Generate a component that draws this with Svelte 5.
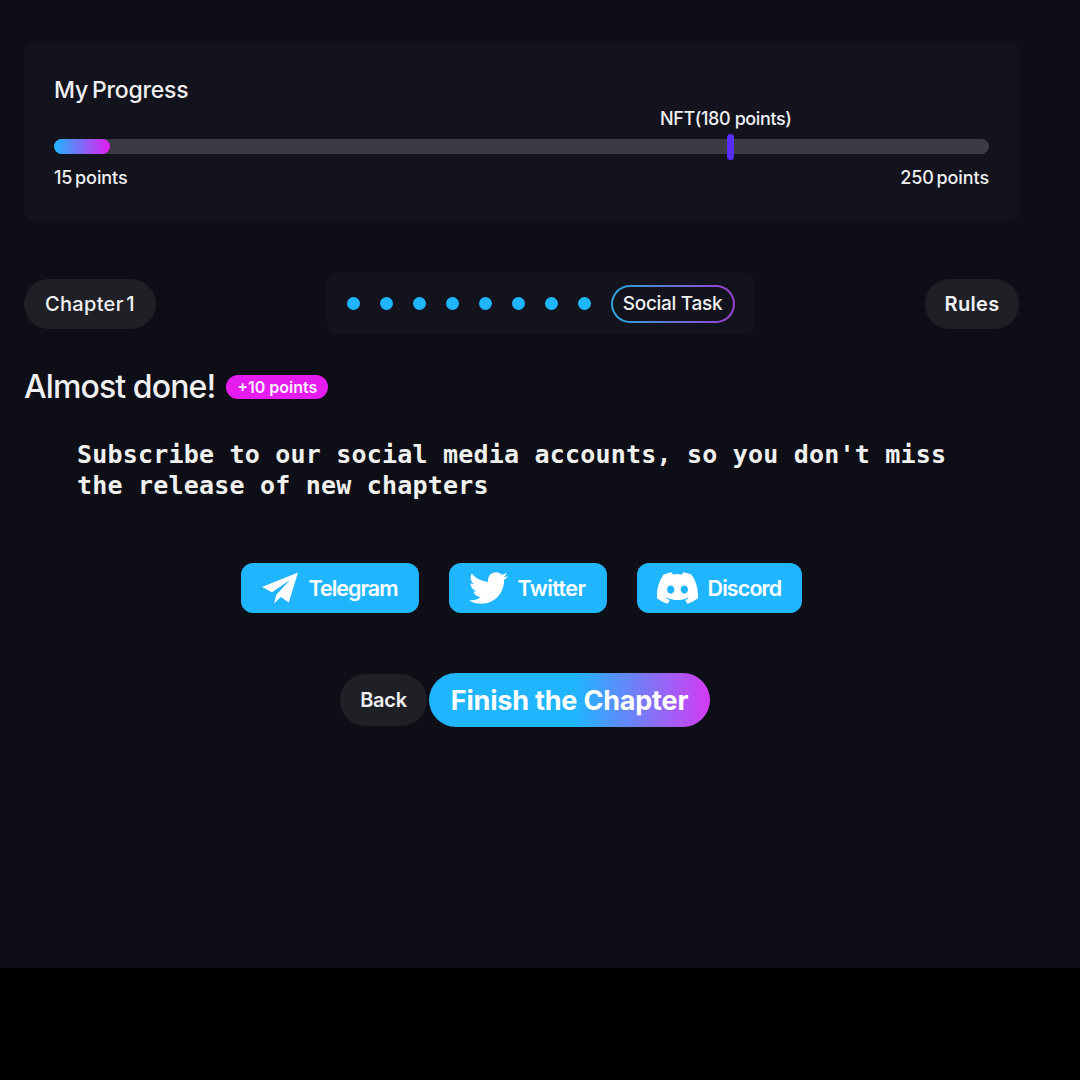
<script>
  const dots = [0, 1, 2, 3, 4, 5, 6, 7];
</script>

<div class="page">
  <section class="card">
    <h2>My Progress</h2>
    <div class="track">
      <div class="fill"></div>
      <span class="nft">NFT(180 points)</span>
      <span class="marker"></span>
    </div>
    <div class="scale"><span>15 points</span><span>250 points</span></div>
  </section>

  <nav class="bar">
    <div class="pill chapter">Chapter 1</div>
    <div class="steps">
      {#each dots as d}<span class="dot"></span>{/each}
      <span class="current">Social Task</span>
    </div>
    <div class="pill rules">Rules</div>
  </nav>

  <div class="title">
    <h1>Almost done!</h1>
    <span class="badge">+10 points</span>
  </div>

  <p class="task">Subscribe to our social media accounts, so you don't miss the release of new chapters</p>

  <div class="socials">
    <div class="social tg">
      <svg width="38" height="32" viewBox="0 0 38 32"><path fill="#fff" d="M37 .5 1 15l10 5.2L29 8 15.5 22.5 13 31.5l6.8-6.4 8 5.5z"/></svg>
      Telegram
    </div>
    <div class="social tw">
      <svg width="39" height="32" viewBox="0 0 512 420"><path transform="translate(0 -46)" fill="#fff" d="M459.37 151.716c.325 4.548.325 9.097.325 13.645 0 138.72-105.583 298.558-298.558 298.558-59.452 0-114.68-17.219-161.137-47.106 8.447.974 16.568 1.299 25.34 1.299 49.055 0 94.213-16.568 130.274-44.832-46.132-.975-84.792-31.188-98.112-72.772 6.498.974 12.995 1.624 19.818 1.624 9.421 0 18.843-1.3 27.614-3.573-48.081-9.747-84.143-51.98-84.143-102.985v-1.299c13.969 7.797 30.214 12.67 47.431 13.319-28.264-18.843-46.781-51.005-46.781-87.391 0-19.492 5.197-37.36 14.294-52.954 51.655 63.675 129.3 105.258 216.365 109.807-1.624-7.797-2.599-15.918-2.599-24.04 0-57.828 46.782-104.934 104.934-104.934 30.213 0 57.502 12.67 76.67 33.137 23.715-4.548 46.456-13.32 66.599-25.34-7.798 24.366-24.366 44.833-46.132 57.827 21.117-2.273 41.584-8.122 60.426-16.243-14.292 20.791-32.161 39.308-52.628 54.253z"/></svg>
      Twitter
    </div>
    <div class="social dc">
      <svg width="41" height="32" viewBox="0 1.8 16 12.4" preserveAspectRatio="none"><path fill="#fff" d="M13.545 2.907a13.227 13.227 0 0 0-3.257-1.011.05.05 0 0 0-.052.025c-.141.25-.297.577-.406.833a12.19 12.19 0 0 0-3.658 0 8.258 8.258 0 0 0-.412-.833.051.051 0 0 0-.052-.025c-1.125.194-2.22.534-3.257 1.011a.041.041 0 0 0-.021.018C.356 6.024-.213 9.047.066 12.032c.001.014.01.028.021.037a13.276 13.276 0 0 0 3.995 2.02.05.05 0 0 0 .056-.019c.308-.42.582-.863.818-1.329a.05.05 0 0 0-.01-.059.051.051 0 0 0-.018-.011 8.875 8.875 0 0 1-1.248-.595.05.05 0 0 1-.02-.066.051.051 0 0 1 .015-.019c.084-.063.168-.129.248-.195a.05.05 0 0 1 .051-.007c2.619 1.196 5.454 1.196 8.041 0a.052.052 0 0 1 .053.007c.08.066.164.132.248.195a.051.051 0 0 1-.004.085 8.254 8.254 0 0 1-1.249.594.05.05 0 0 0-.03.03.052.052 0 0 0 .003.041c.24.465.515.909.817 1.329a.05.05 0 0 0 .056.019 13.235 13.235 0 0 0 4.001-2.02.049.049 0 0 0 .021-.037c.334-3.451-.559-6.449-2.366-9.106a.034.034 0 0 0-.02-.019Zm-8.198 7.307c-.789 0-1.438-.724-1.438-1.612 0-.889.637-1.613 1.438-1.613.807 0 1.45.73 1.438 1.613 0 .888-.637 1.612-1.438 1.612Zm5.316 0c-.788 0-1.438-.724-1.438-1.612 0-.889.637-1.613 1.438-1.613.807 0 1.451.73 1.438 1.613 0 .888-.631 1.612-1.438 1.612Z"/></svg>
      Discord
    </div>
  </div>

  <div class="actions">
    <div class="back">Back</div>
    <div class="finish">Finish the Chapter</div>
  </div>
</div>

<style>
  :global(body) {
    margin: 0;
    background: #000;
  }
  .page {
    box-sizing: border-box;
    width: 1080px;
    height: 968px;
    padding: 42px 60px 0 24px;
    background: #0d0e16;
    color: #f0f0f2;
    font-family: Inter, "Noto Sans", sans-serif;
  }
  .card {
    box-sizing: border-box;
    height: 179px;
    padding: 34px 31px 0 30px;
    background: #12131d;
    border-radius: 10px;
  }
  h2 {
    margin: 0;
    font-size: 23px;
    line-height: 28px;
    font-weight: 500;
    letter-spacing: -0.2px;
    word-spacing: -2px;
  }
  .track {
    position: relative;
    height: 15px;
    margin-top: 35px;
    background: #3b3b45;
    border-radius: 8px;
  }
  .fill {
    width: 56px;
    height: 100%;
    border-radius: 8px;
    background: linear-gradient(90deg, #1fb6ff, #e41cf0);
  }
  .nft {
    position: absolute;
    left: 606px;
    top: -32px;
    font-size: 18px;
    line-height: 24px;
    font-weight: 500;
    letter-spacing: -0.4px;
    white-space: nowrap;
  }
  .marker {
    position: absolute;
    left: 673px;
    top: -5px;
    width: 7px;
    height: 26px;
    border-radius: 4px;
    background: #5a2dff;
  }
  .scale {
    display: flex;
    justify-content: space-between;
    margin-top: 12px;
    font-size: 18px;
    line-height: 24px;
    font-weight: 500;
    letter-spacing: -0.1px;
    word-spacing: -2px;
  }
  .bar {
    display: flex;
    justify-content: space-between;
    align-items: center;
    margin: 51px 1px 0 0;
  }
  .pill {
    box-sizing: border-box;
    height: 50px;
    display: flex;
    align-items: center;
    justify-content: center;
    background: #1f2026;
    border-radius: 25px;
    font-size: 20px;
    font-weight: 500;
    letter-spacing: 0.3px;
    word-spacing: -3px;
  }
  .chapter { width: 132px; }
  .rules {
    width: 94px;
    font-weight: 600;
  }
  .steps {
    box-sizing: border-box;
    width: 428px;
    height: 63px;
    padding: 0 20px;
    display: flex;
    align-items: center;
    justify-content: space-between;
    background: #12131d;
    border-radius: 10px;
  }
  .dot {
    width: 13px;
    height: 13px;
    border-radius: 50%;
    background: #1fb6ff;
  }
  .current {
    box-sizing: border-box;
    width: 124px;
    height: 38px;
    display: flex;
    align-items: center;
    justify-content: center;
    border: 2px solid transparent;
    border-radius: 19px;
    background:
      linear-gradient(#12131d, #12131d) padding-box,
      linear-gradient(90deg, #2aa5dd, #9c3fd2) border-box;
    font-size: 19px;
    font-weight: 500;
    letter-spacing: -0.3px;
  }
  .title {
    display: flex;
    align-items: center;
    gap: 11px;
    margin-top: 30px;
  }
  h1 {
    margin: 0;
    font-size: 32px;
    line-height: 44px;
    font-weight: 500;
    letter-spacing: -0.9px;
  }
  .badge {
    box-sizing: border-box;
    width: 102px;
    height: 24px;
    display: flex;
    align-items: center;
    justify-content: center;
    border-radius: 12px;
    background: #e41cf0;
    font-size: 16px;
    font-weight: 600;
    letter-spacing: 0;
    color: #fbeaff;
  }
  .task {
    width: 890px;
    margin: 30px 0 0 53px;
    font-family: "DejaVu Sans Mono", "Liberation Mono", monospace;
    font-size: 25px;
    line-height: 31px;
    font-weight: 700;
    letter-spacing: 0.2px;
    color: #f0f0ee;
  }
  .socials {
    display: flex;
    justify-content: center;
    gap: 30px;
    margin: 62px 2px 0 0;
  }
  .social {
    box-sizing: border-box;
    height: 50px;
    display: flex;
    align-items: center;
    gap: 10px;
    padding-left: 20px;
    border-radius: 12px;
    background: #1fb6ff;
    color: #fff;
    font-size: 21.5px;
    font-weight: 600;
    letter-spacing: -0.6px;
  }
  .tg {
    width: 178px;
    letter-spacing: -1px;
  }
  .tw { width: 158px; }
  .dc {
    width: 165px;
    letter-spacing: -0.9px;
  }
  .actions {
    display: flex;
    justify-content: center;
    align-items: center;
    gap: 2px;
    margin: 60px 0 0 6px;
  }
  .back {
    width: 87px;
    height: 52px;
    display: flex;
    align-items: center;
    justify-content: center;
    border-radius: 26px;
    background: #1f2026;
    font-size: 20px;
    font-weight: 600;
    letter-spacing: -0.3px;
  }
  .finish {
    width: 281px;
    height: 54px;
    display: flex;
    align-items: center;
    justify-content: center;
    border-radius: 27px;
    background: linear-gradient(90deg, #1fb6ff 52%, #d43bf2);
    color: #fff;
    font-size: 27px;
    font-weight: 700;
    letter-spacing: -0.2px;
  }
</style>
